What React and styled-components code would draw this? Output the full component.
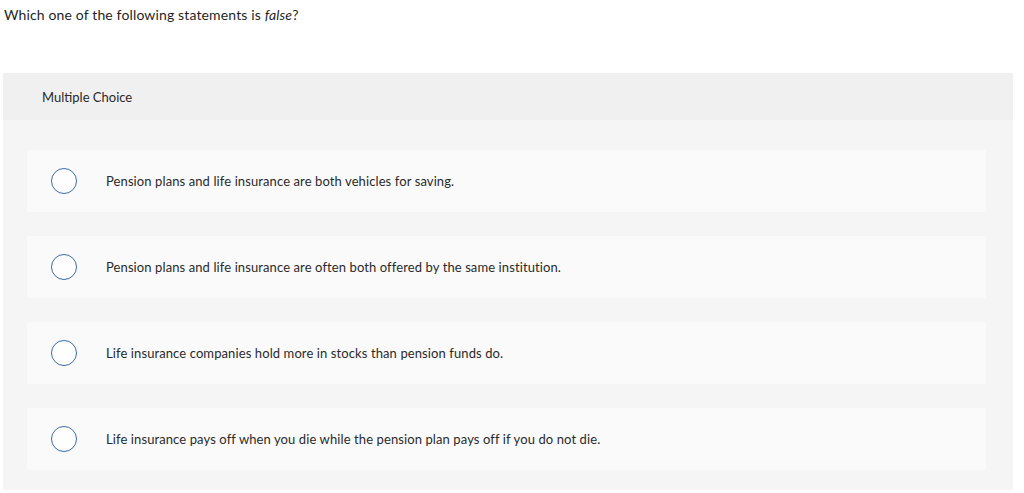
import React from "react";
import styled, { createGlobalStyle } from "styled-components";

const GlobalStyle = createGlobalStyle`
  body {
    margin: 0;
    background: #ffffff;
    font-family: "Lato", "Open Sans", sans-serif;
    color: #222222;
  }
`;

const Page = styled.div`
  width: 1024px;
  height: 493px;
  overflow: hidden;
  padding: 6px 11px 0 3px;
  box-sizing: border-box;
`;

const Question = styled.p`
  margin: 0 0 0 1px;
  font-size: 14px;
  line-height: 17px;
  letter-spacing: 0.14px;
  color: #1f1f1f;
  em {
    font-style: italic;
  }
`;

const Panel = styled.div`
  margin-top: 50px;
  width: 1010px;
`;

const PanelHeader = styled.div`
  height: 47px;
  background: #f0f0f0;
  display: flex;
  align-items: center;
  padding-left: 39px;
  font-size: 13px;
  color: #2a2a2a;
`;

const OptionList = styled.div`
  background: #f5f5f5;
  padding: 30px 27px 20px 24px;
  display: flex;
  flex-direction: column;
  gap: 24px;
`;

const Option = styled.label`
  height: 62px;
  background: #fafafa;
  border-radius: 3px;
  display: flex;
  align-items: center;
  padding-left: 24px;
  cursor: pointer;
`;

const Radio = styled.span`
  width: 24px;
  height: 24px;
  border: 1.4px solid #3b6aa6;
  border-radius: 50%;
  background: #fff;
  flex-shrink: 0;
`;

const OptionText = styled.span`
  margin-left: 29px;
  font-size: 13px;
  letter-spacing: 0.1px;
  color: #2a2a2a;
`;

const options = [
  "Pension plans and life insurance are both vehicles for saving.",
  "Pension plans and life insurance are often both offered by the same institution.",
  "Life insurance companies hold more in stocks than pension funds do.",
  "Life insurance pays off when you die while the pension plan pays off if you do not die.",
];

const App = () => {
  return (
    <Page>
      <GlobalStyle />
      <Question>
        Which one of the following statements is <em>false</em>?
      </Question>
      <Panel>
        <PanelHeader>Multiple Choice</PanelHeader>
        <OptionList>
          {options.map((text) => (
            <Option key={text}>
              <Radio />
              <OptionText>{text}</OptionText>
            </Option>
          ))}
        </OptionList>
      </Panel>
    </Page>
  );
};

export default App;
